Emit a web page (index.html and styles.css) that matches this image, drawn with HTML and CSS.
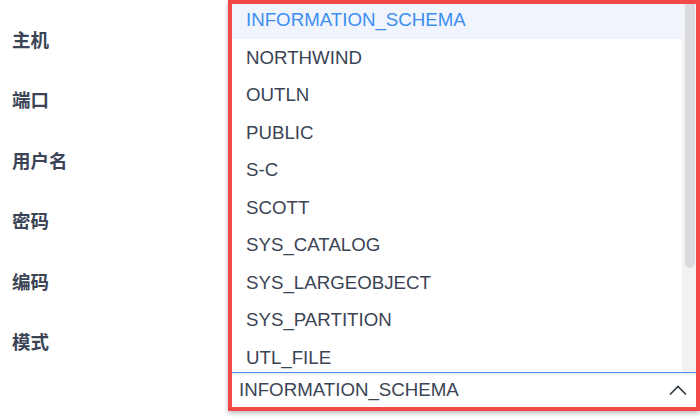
FILE: index.html
```html
<!DOCTYPE html>
<html lang="zh">
<head>
<meta charset="utf-8">
<title>连接设置</title>
<link rel="stylesheet" href="styles.css">
</head>
<body>
<div class="page">
  <div class="labels">
    <div class="label">主机</div>
    <div class="label">端口</div>
    <div class="label">用户名</div>
    <div class="label">密码</div>
    <div class="label">编码</div>
    <div class="label">模式</div>
  </div>
  <div class="frame">
    <div class="panel">
      <ul class="options">
        <li class="option active">INFORMATION_SCHEMA</li>
        <li class="option">NORTHWIND</li>
        <li class="option">OUTLN</li>
        <li class="option">PUBLIC</li>
        <li class="option">S-C</li>
        <li class="option">SCOTT</li>
        <li class="option">SYS_CATALOG</li>
        <li class="option">SYS_LARGEOBJECT</li>
        <li class="option">SYS_PARTITION</li>
        <li class="option">UTL_FILE</li>
      </ul>
      <div class="track"><div class="thumb"></div></div>
    </div>
    <div class="select">
      <span class="value">INFORMATION_SCHEMA</span>
      <svg class="chevron" width="18" height="12" viewBox="0 0 18 12"><path d="M1 10.5 L9 2.5 L17 10.5" fill="none" stroke="#2f3542" stroke-width="1.6"/></svg>
    </div>
  </div>
</div>
</body>
</html>
```
FILE: styles.css
```css
html, body {
  margin: 0;
  padding: 0;
  background: #ffffff;
}
body {
  width: 700px;
  height: 420px;
  overflow: hidden;
  font-family: "Liberation Sans", Arial, "Noto Sans CJK SC", sans-serif;
}
.page {
  display: flex;
  align-items: flex-start;
}
.labels {
  width: 228px;
  flex: none;
  display: flex;
  flex-direction: column;
  padding-top: 9px;
}
.label {
  height: 60.4px;
  line-height: 60.4px;
  padding-left: 12px;
  font-family: "Noto Sans CJK SC", sans-serif;
  font-weight: 700;
  font-size: 18.5px;
  color: #3b4455;
}
.frame {
  width: 464px;
  height: 403px;
  border: 4px solid #f24848;
  box-shadow: 0 2px 5px rgba(0, 0, 0, 0.28);
  display: flex;
  flex-direction: column;
  background: #fff;
}
.panel {
  height: 368px;
  display: flex;
  overflow: hidden;
  box-shadow: inset 0 2px 2px -1px rgba(0, 0, 0, 0.25);
}
.options {
  flex: 1;
  margin: -3px 0 0 0;
  padding: 0;
  list-style: none;
}
.option {
  height: 37.5px;
  line-height: 37.5px;
  padding-left: 14px;
  font-size: 18.7px;
  color: #3b4455;
  white-space: nowrap;
}
.option.active {
  background: #f0f5fd;
  color: #3d8ef0;
}
.track {
  width: 14px;
  flex: none;
  background: #f2f2f3;
  display: flex;
  justify-content: flex-end;
  padding-right: 1px;
  box-sizing: border-box;
}
.thumb {
  width: 10px;
  height: 264px;
  background: #d9dade;
  border-radius: 0 0 5px 5px;
}
.select {
  height: 34px;
  border-top: 1px solid #4a8fe2;
  box-shadow: inset 0 1px 1px rgba(0, 0, 0, 0.08);
  display: flex;
  align-items: center;
  justify-content: space-between;
  padding: 0 9px 0 7px;
}
.value {
  font-size: 18.7px;
  color: #3b4455;
  white-space: nowrap;
}
.chevron {
  display: block;
}
```
